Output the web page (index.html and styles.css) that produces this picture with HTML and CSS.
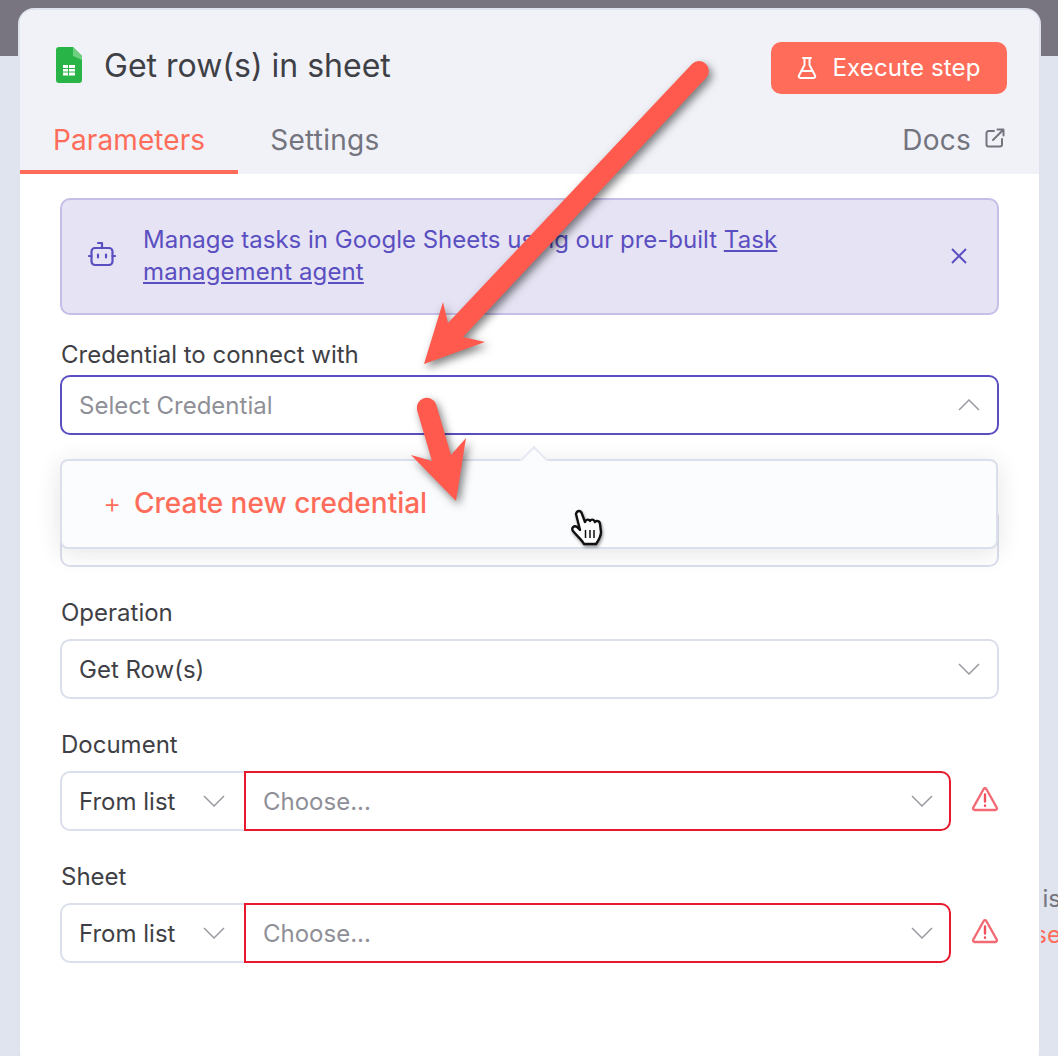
FILE: index.html
```html
<!DOCTYPE html>
<html lang="en">
<head>
  <meta charset="UTF-8" />
  <title>Get row(s) in sheet</title>
  <link rel="stylesheet" href="styles.css">
</head>
<body>
  <!-- canvas text peeking out behind the panel -->
  <div class="behind">
    <div>This is</div>
    <div class="behind-link">to use</div>
  </div>

  <div class="card">
    <div class="header">
      <div class="title-row">
        <div class="title">
          <svg class="sheet-icon" width="26" height="36" viewBox="0 0 26 36">
            <path d="M3 0H17L26 9V33A3 3 0 0 1 23 36H3A3 3 0 0 1 0 33V3A3 3 0 0 1 3 0Z" fill="#28b446"/>
            <path d="M17 0L26 9V13L17 9Z" fill="#6fd07f"/>
            <path d="M7 18H19V28.500H7Z" fill="#fff"/>
            <path d="M7 21.500H19M7 25H19M12.500 18V28.500" stroke="#28b446" stroke-width="1" fill="none"/>
          </svg>
          <h1>Get row(s) in sheet</h1>
        </div>
        <button class="run-btn">
          <svg width="20" height="24" viewBox="0 0 20 24" fill="none" stroke="#fff" stroke-width="2" stroke-linejoin="round" stroke-linecap="round">
            <path d="M6 2H14M7.500 2V9L2 19.500C1.300 21 2 22 3.500 22H16.500C18 22 18.700 21 18 19.500L12.500 9V2"/>
            <path d="M4.500 15H15.500"/>
          </svg>
          Execute step
        </button>
      </div>
      <div class="tabs">
        <div class="tab active">Parameters</div>
        <div class="tab">Settings</div>
        <div class="docs">
          Docs
          <svg width="20" height="20" viewBox="0 0 20 20" fill="none" stroke="#74747e" stroke-width="2" stroke-linecap="round" stroke-linejoin="round">
            <path d="M9 3H3.500A2 2 0 0 0 1.500 5V16.500A2 2 0 0 0 3.500 18.500H15A2 2 0 0 0 17 16.500V11"/>
            <path d="M8 12L18.500 1.500M12.500 1.500H18.500V7.500"/>
          </svg>
        </div>
      </div>
    </div>

    <div class="form">
      <div class="banner">
        <svg class="bot-icon" width="28" height="26" viewBox="0 0 28 26" fill="none" stroke="#5a4fc0" stroke-width="2.200" stroke-linecap="round" stroke-linejoin="round">
          <path d="M14 7V2H10"/>
          <rect x="3.500" y="7" width="21" height="17" rx="3.500"/>
          <path d="M1 15H3.500M24.500 15H27M10 13.500V16.500M18 13.500V16.500"/>
        </svg>
        <div class="banner-text">Manage tasks in Google Sheets using our pre-built <a href="#">Task management agent</a></div>
        <svg class="close-icon" width="16" height="16" viewBox="0 0 16 16" fill="none" stroke="#5a4fc0" stroke-width="2">
          <path d="M1 1L15 15M15 1L1 15"/>
        </svg>
      </div>

      <div class="field field-cred">
        <label>Credential to connect with</label>
        <div class="select focused">
          <span class="placeholder">Select Credential</span>
          <svg class="chevron" width="22" height="12" viewBox="0 0 22 12"><path d="M1 11L11 1L21 11"/></svg>
        </div>
      </div>

      <div class="field-hidden">
        <div class="dropdown">
          <span class="caret"></span>
          <span class="plus">+</span>
          <span class="create">Create new credential</span>
        </div>
      </div>

      <div class="field">
        <label>Operation</label>
        <div class="select">
          <span>Get Row(s)</span>
          <svg class="chevron" width="22" height="12" viewBox="0 0 22 12"><path d="M1 1L11 11L21 1"/></svg>
        </div>
      </div>

      <div class="field">
        <label>Document</label>
        <div class="locator">
          <div class="mode">
            <span>From list</span>
            <svg class="chevron" width="22" height="12" viewBox="0 0 22 12"><path d="M1 1L11 11L21 1"/></svg>
          </div>
          <div class="choose">
            <span class="placeholder">Choose...</span>
            <svg class="chevron" width="22" height="12" viewBox="0 0 22 12"><path d="M1 1L11 11L21 1"/></svg>
          </div>
          <svg class="warn" width="28" height="26" viewBox="0 0 28 26" fill="none" stroke="#f26b74" stroke-width="2.400" stroke-linejoin="round" stroke-linecap="round">
            <path d="M12.700 3C13.300 2 14.700 2 15.300 3L25.700 21.500C26.300 22.600 25.600 24 24.300 24H3.700C2.400 24 1.700 22.600 2.300 21.500Z"/>
            <path class="warn-mark" d="M14 8.500V15.500M14 19.500V19.700"/>
          </svg>
        </div>
      </div>

      <div class="field">
        <label>Sheet</label>
        <div class="locator">
          <div class="mode">
            <span>From list</span>
            <svg class="chevron" width="22" height="12" viewBox="0 0 22 12"><path d="M1 1L11 11L21 1"/></svg>
          </div>
          <div class="choose">
            <span class="placeholder">Choose...</span>
            <svg class="chevron" width="22" height="12" viewBox="0 0 22 12"><path d="M1 1L11 11L21 1"/></svg>
          </div>
          <svg class="warn" width="28" height="26" viewBox="0 0 28 26" fill="none" stroke="#f26b74" stroke-width="2.400" stroke-linejoin="round" stroke-linecap="round">
            <path d="M12.700 3C13.300 2 14.700 2 15.300 3L25.700 21.500C26.300 22.600 25.600 24 24.300 24H3.700C2.400 24 1.700 22.600 2.300 21.500Z"/>
            <path class="warn-mark" d="M14 8.500V15.500M14 19.500V19.700"/>
          </svg>
        </div>
      </div>
    </div>
  </div>

  <!-- annotation arrows and the mouse pointer drawn on top of the screenshot -->
  <svg class="annotations" width="1058" height="1056" viewBox="0 0 1058 1056">
    <g class="arrow">
      <path d="M692,64 A9.500 9.500 0 0 1 706,78 L463,337 L485,342 L424,364 L443,302 L448,323 Z"/>
      <path d="M417,410 A10 10 0 0 1 436,404 L451,455 L466,438 L456,501 L411,455 L432,461 Z"/>
    </g>
    <g class="pointer">
      <path d="M576,514 C577,510 581,510 582,514 L585,522 C586,519 589,519 590,521 C591,519 594,519 595,522 C596,520 600,521 600,524 L601,532 C601,537 598,541 596,544 L584,544 C582,540 578,537 573,531 C571,528 574,525 577,527 L580,530 Z"/>
      <path class="pointer-lines" d="M585.500,530V538M590,530V538M594,530V538"/>
    </g>
  </svg>
</body>
</html>
```

FILE: styles.css
```css
* {
  box-sizing: border-box;
}
html, body {
  height: 1056px;
}
body {
  margin: 0;
  overflow: hidden;
  position: relative;
  font-family: Inter, "Liberation Sans", sans-serif;
  color: #3f3f46;
  background: linear-gradient(#787580 0, #787580 56px, #e0e4ee 56px);
}
.behind {
  position: absolute;
  right: -3px;
  top: 881px;
  text-align: right;
  font-size: 24px;
  line-height: 36px;
  color: #74747e;
  white-space: nowrap;
}
.behind-link {
  color: #ff6d5a;
}
.card {
  position: relative;
  margin: 8px 0 0 18px;
  width: 1023px;
  height: 1060px;
  background: #fff;
  border: 2px solid #dfe3ee;
  border-radius: 16px;
  overflow: hidden;
}
.header {
  background: #f0f2f8;
  height: 164px;
  padding: 32px 0 0;
}
.title-row {
  display: flex;
  justify-content: space-between;
  align-items: flex-start;
  padding: 0 32px 0 36px;
  height: 82px;
}
.title {
  display: flex;
  align-items: center;
  gap: 22px;
  margin-top: 3px;
}
.sheet-icon {
  display: block;
}
h1 {
  margin: 3px 0 0;
  font-size: 32px;
  font-weight: 400;
  line-height: 36px;
  color: #3f3f46;
}
.run-btn {
  display: flex;
  align-items: center;
  justify-content: center;
  gap: 15px;
  width: 236px;
  height: 52px;
  padding-bottom: 2px;
  border: none;
  border-radius: 10px;
  background: #ff6d5a;
  color: #fff;
  font-family: inherit;
  font-size: 24px;
  letter-spacing: 0.15px;
}
.tabs {
  display: flex;
  height: 50px;
  font-size: 28px;
  line-height: 32px;
  letter-spacing: 0.25px;
  color: #74747e;
}
.tab {
  padding: 0 33px 0 32px;
  height: 50px;
}
.tab.active {
  color: #ff6d5a;
  border-bottom: 4px solid #ff6d5a;
  padding: 0 33px;
  letter-spacing: 0.1px;
}
.docs {
  margin-left: auto;
  padding-right: 34px;
  display: flex;
  align-items: flex-start;
  gap: 14px;
}
.docs svg {
  margin-top: 4px;
}
.form {
  padding: 24px 40px 0 40px;
}
.banner {
  display: flex;
  align-items: center;
  height: 117px;
  width: 939px;
  padding: 0 30px 2px 26px;
  background: #e6e3f4;
  border: 2px solid #c5bfe8;
  border-radius: 10px;
  color: #5a4fc0;
  font-size: 24px;
  line-height: 32px;
}
.bot-icon {
  margin-top: -4px;
}
.banner-text {
  width: 680px;
  margin-left: 27px;
}
.banner-text a {
  color: inherit;
  letter-spacing: 0.12px;
}
.close-icon {
  margin-left: auto;
}
.field {
  margin-top: 36px;
  width: 939px;
}
.field label {
  display: block;
  font-size: 24px;
  line-height: 20px;
  height: 36px;
  color: #3f3f46;
  padding-left: 1px;
}
.field-cred {
  margin-top: 24px;
}
.field-cred label {
  line-height: 32px;
}
.select {
  display: flex;
  align-items: center;
  justify-content: space-between;
  height: 60px;
  padding: 0 17px;
  border: 2px solid #dbdfeb;
  border-radius: 10px;
  font-size: 24px;
  background: #fff;
}
.select.focused {
  border-color: #5a4fc0;
}
.placeholder {
  color: #8f8f98;
}
.chevron {
  flex: none;
  fill: none;
  stroke: #9a9aa2;
  stroke-width: 1.500;
}
.field-hidden {
  position: relative;
  margin-top: 72px;
  width: 939px;
  height: 60px;
  border: 2px solid #dbdfeb;
  border-radius: 10px;
}
.dropdown {
  position: absolute;
  left: -2px;
  right: -1px;
  top: -50px;
  height: 90px;
  display: flex;
  align-items: center;
  padding: 0 0 2px 41px;
  background: #fbfcfe;
  border: 2px solid #dbdfeb;
  border-radius: 8px;
  box-shadow: 0 4px 24px rgba(40, 40, 60, 0.12);
}
.caret {
  position: absolute;
  left: 462px;
  top: -11px;
  width: 20px;
  height: 20px;
  background: #fbfcfe;
  border-left: 2px solid #e6e9f2;
  border-top: 2px solid #e6e9f2;
  transform: rotate(45deg);
}
.plus {
  font-size: 28px;
  font-weight: 300;
  color: #ff6d5a;
  width: 31px;
}
.create {
  font-size: 28px;
  font-weight: 500;
  color: #ff6d5a;
}
.locator {
  display: flex;
  align-items: center;
  height: 60px;
  font-size: 24px;
}
.mode {
  display: flex;
  align-items: center;
  justify-content: space-between;
  width: 185px;
  height: 60px;
  padding: 0 20px 0 17px;
  border: 2px solid #dbdfeb;
  border-right: none;
  border-radius: 10px 0 0 10px;
}
.choose {
  display: flex;
  align-items: center;
  justify-content: space-between;
  width: 707px;
  height: 60px;
  padding: 0 16px 0 17px;
  margin-left: -1px;
  border: 2px solid #e8192c;
  border-radius: 0 10px 10px 0;
}
.warn {
  margin: 0 0 4px 20px;
  flex: none;
}
.warn-mark {
  stroke: #f0505c;
}
.annotations {
  position: absolute;
  left: 0;
  top: 0;
  pointer-events: none;
}
.arrow {
  fill: #ff5a4d;
  filter: drop-shadow(3px 4px 4px rgba(0, 0, 0, 0.5));
}
.pointer {
  fill: #fff;
  stroke: #111;
  stroke-width: 2.400;
  stroke-linejoin: round;
  filter: drop-shadow(1px 2px 1.500px rgba(0, 0, 0, 0.4));
}
.pointer-lines {
  fill: none;
  stroke-width: 1.500;
}
```
